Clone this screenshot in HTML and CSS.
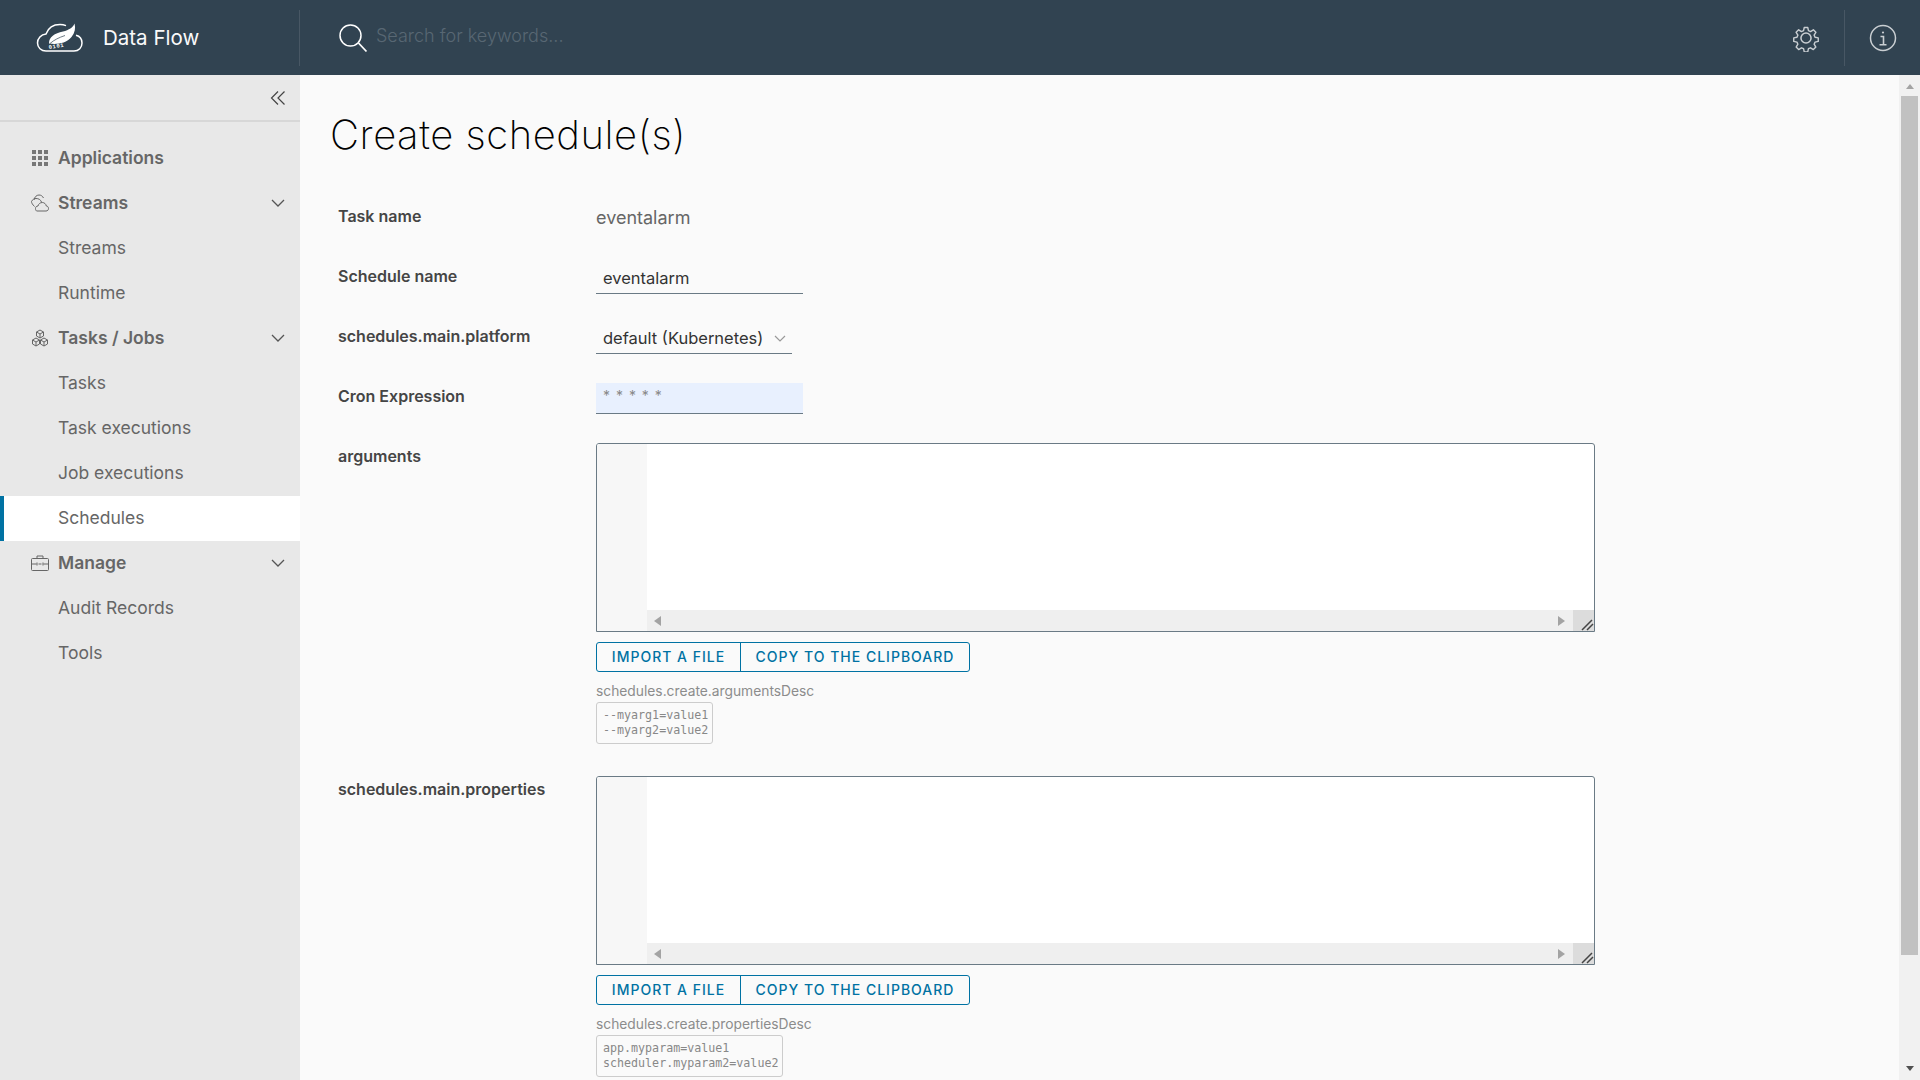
FILE: index.html
```html
<!DOCTYPE html>
<html lang="en">
<head>
  <meta charset="utf-8">
  <title>Data Flow – Create schedule(s)</title>
  <link rel="stylesheet" href="styles.css">
</head>
<body>

<!-- ───────── Top bar ───────── -->
<header class="topbar">
  <div class="brand">
    <svg class="logo" width="48" height="30" viewBox="0 0 48 30">
      <path d="M30 2.600C28 1.800 26 1.500 24 1.500c-7 0-12 4-14 9.500C5 11.500 1.500 15.500 1.500 20c0 4.500 3.800 8 8.500 8H38c4.800 0 8-3.500 8-8 0-4-2.500-7-6-7.800" fill="none" stroke="#fff" stroke-width="1.500"/>
      <path d="M38.500 .5c-1.500 4-5.500 6.500-11.500 8C18.500 10.500 13 13.500 13 20.500c7 1 17 .5 22.500-6.500 3.500-4.500 4.300-9 3-13.500z" fill="#fff"/>
      <path d="M14 20.500c4-3.500 9-6 15-8" fill="none" stroke="#314351" stroke-width=".7"/>
      <text class="logo-bits" x="13" y="26" transform="rotate(-9 13 26)">0101</text>
    </svg>
    <span class="brand-name">Data Flow</span>
  </div>
  <div class="search">
    <svg width="32" height="32" viewBox="0 0 32 32" fill="none" stroke="#fff" stroke-width="1.500">
      <circle cx="13.500" cy="13.500" r="10.500"/>
      <path d="M21.500 21l8 8.500" stroke-width="1.800"/>
    </svg>
    <span class="search-text">Search for keywords...</span>
  </div>
  <div class="topbar-icon">
    <svg width="28" height="28" viewBox="0 0 36 36" fill="none" stroke="#c9ced2" stroke-width="2">
      <path d="M15.500 3h5l1 4.500 3 1.300 4-2.500 3.600 3.600-2.500 4 1.300 3 4.600 1v5l-4.600 1-1.300 3 2.500 4-3.600 3.600-4-2.500-3 1.300-1 4.500h-5l-1-4.500-3-1.300-4 2.500-3.600-3.600 2.500-4-1.300-3-4.600-1v-5l4.600-1 1.300-3-2.500-4 3.600-3.600 4 2.500 3-1.300z" stroke-linejoin="round" transform="translate(1.800 1.800) scale(.9)"/>
      <circle cx="18" cy="18" r="6.500"/>
    </svg>
  </div>
  <div class="topbar-icon divided">
    <svg width="28" height="28" viewBox="0 0 28 28" fill="none" stroke="#c9ced2" stroke-width="1.500">
      <circle cx="14" cy="14" r="12.500"/>
      <path d="M11.500 12.500H14.500V20.500M10.500 20.800H17.500" stroke-width="1.600"/>
      <circle cx="14" cy="8.500" r="1.100" fill="#c9ced2" stroke="none"/>
    </svg>
  </div>
</header>

<div class="layout">

  <!-- ───────── Side nav ───────── -->
  <nav class="sidenav">
    <div class="collapse">
      <svg width="16" height="16" viewBox="0 0 16 16" fill="none" stroke="#444" stroke-width="1.200">
        <path d="M8 1.500L1.500 8 8 14.500M14.500 1.500L8 8l6.500 6.500"/>
      </svg>
    </div>
    <ul class="navlist">
      <li class="nav-head">
        <svg class="nav-icon" width="18" height="18" viewBox="0 0 18 18" fill="#777">
          <rect x="1" y="1" width="4" height="4"/><rect x="7" y="1" width="4" height="4"/><rect x="13" y="1" width="4" height="4"/>
          <rect x="1" y="7" width="4" height="4"/><rect x="7" y="7" width="4" height="4"/><rect x="13" y="7" width="4" height="4"/>
          <rect x="1" y="13" width="4" height="4"/><rect x="7" y="13" width="4" height="4"/><rect x="13" y="13" width="4" height="4"/>
        </svg>
        Applications
      </li>
      <li class="nav-head">
        <svg class="nav-icon" width="18" height="18" viewBox="0 0 18 18" fill="none" stroke="#666">
          <path d="M6 17h9c1.500 0 2.500-1 2.500-2.500S16.500 12 15.300 12c-.3-2-2-3.500-4-3.500-2.200 0-3.800 1.500-4.300 3.500C5.500 12 4.500 13 4.500 14.500S5 17 6 17z"/>
          <path d="M3.500 12.500C1.500 10.500.5 9 .5 7.500 1.500 5.500 3 4.500 5 4.500c2.500 0 4.500 1 5.500 3.500"/>
          <path d="M3 6C3.500 3 5.500 1 8 1c2 0 3.500 1 4.500 3"/>
        </svg>
        Streams
        <svg class="chevron" width="14" height="8" viewBox="0 0 14 8" fill="none" stroke="#555" stroke-width="1.300"><path d="M1 1l6 6 6-6"/></svg>
      </li>
      <li class="nav-sub">Streams</li>
      <li class="nav-sub">Runtime</li>
      <li class="nav-head">
        <svg class="nav-icon" width="18" height="18" viewBox="0 0 18 18" fill="none" stroke="#666">
          <path d="M9 1l3.500 2v4L9 9 5.500 7V3zM5.500 3L9 5l3.500-2M9 5v4"/>
          <path d="M5 9l3.500 2v4L5 17l-3.500-2v-4zM1.500 11L5 13l3.500-2M5 13v4"/>
          <path d="M13 9l3.500 2v4L13 17l-3.500-2v-4zM9.500 11l3.500 2 3.500-2M13 13v4"/>
        </svg>
        Tasks / Jobs
        <svg class="chevron" width="14" height="8" viewBox="0 0 14 8" fill="none" stroke="#555" stroke-width="1.300"><path d="M1 1l6 6 6-6"/></svg>
      </li>
      <li class="nav-sub">Tasks</li>
      <li class="nav-sub">Task executions</li>
      <li class="nav-sub">Job executions</li>
      <li class="nav-sub active">Schedules</li>
      <li class="nav-head">
        <svg class="nav-icon" width="18" height="16" viewBox="0 0 18 16" fill="none" stroke="#666">
          <rect x=".5" y="3.500" width="17" height="12" rx="1"/>
          <path d="M6 3.500V1h6v2.500M.5 9h5M12.500 9h5M6 7.500v3M12 7.500v3M7.500 9h3"/>
        </svg>
        Manage
        <svg class="chevron" width="14" height="8" viewBox="0 0 14 8" fill="none" stroke="#555" stroke-width="1.300"><path d="M1 1l6 6 6-6"/></svg>
      </li>
      <li class="nav-sub">Audit Records</li>
      <li class="nav-sub">Tools</li>
    </ul>
  </nav>

  <!-- ───────── Form ───────── -->
  <main class="content">
    <h1>Create schedule(s)</h1>

    <div class="row">
      <label>Task name</label>
      <div class="static">eventalarm</div>
    </div>
    <div class="row">
      <label>Schedule name</label>
      <div class="input">eventalarm</div>
    </div>
    <div class="row">
      <label>schedules.main.platform</label>
      <div class="input select">
        default (Kubernetes)
        <svg width="12" height="7" viewBox="0 0 12 7" fill="none" stroke="#999" stroke-width="1.200"><path d="M1 1l5 5 5-5"/></svg>
      </div>
    </div>
    <div class="row">
      <label>Cron Expression</label>
      <div class="input cron">* * * * *</div>
    </div>

    <div class="row editor-row">
      <label>arguments</label>
      <div class="field">
        <div class="editor">
          <div class="gutter"></div>
          <div class="editor-main">
            <div class="editor-text"></div>
            <div class="hscroll">
              <span class="arrow-left"></span>
              <span class="arrow-right"></span>
              <span class="resizer">
                <svg width="13" height="12" viewBox="0 0 13 12" fill="none" stroke="#444" stroke-width="1.500"><path d="M1 11L11 1M6 11l6-6"/></svg>
              </span>
            </div>
          </div>
        </div>
        <div class="btn-group">
          <button class="import">Import a file</button>
          <button class="copy">Copy to the clipboard</button>
        </div>
        <p class="desc">schedules.create.argumentsDesc</p>
        <pre class="sample">--myarg1=value1
--myarg2=value2</pre>
      </div>
    </div>

    <div class="row editor-row">
      <label>schedules.main.properties</label>
      <div class="field">
        <div class="editor">
          <div class="gutter"></div>
          <div class="editor-main">
            <div class="editor-text"></div>
            <div class="hscroll">
              <span class="arrow-left"></span>
              <span class="arrow-right"></span>
              <span class="resizer">
                <svg width="13" height="12" viewBox="0 0 13 12" fill="none" stroke="#444" stroke-width="1.500"><path d="M1 11L11 1M6 11l6-6"/></svg>
              </span>
            </div>
          </div>
        </div>
        <div class="btn-group">
          <button class="import">Import a file</button>
          <button class="copy">Copy to the clipboard</button>
        </div>
        <p class="desc">schedules.create.propertiesDesc</p>
        <pre class="sample">app.myparam=value1
scheduler.myparam2=value2</pre>
      </div>
    </div>
  </main>

  <!-- page scrollbar -->
  <div class="vscroll">
    <span class="arrow-up"></span>
    <span class="thumb"></span>
    <span class="arrow-down"></span>
  </div>
</div>

</body>
</html>
```

FILE: styles.css
```css
:root {font-family: Inter, "Noto Sans", sans-serif;}
html, body {height:100%}
body   {margin:0;overflow:hidden;background:#fafafa;color:#565656}

/* top bar */
.topbar {display:flex;align-items:center;height:75px;background:#314351;color:#fff}
.brand  {display:flex;align-items:center;width:300px;height:56px;padding-left:36px;
         box-sizing:border-box;border-right:1px solid #485764}
.brand-name {margin-left:19px;font-size:20.500px;color:#fafafa}
.logo   {flex:none}
.logo-bits {font:700 5.500px "Liberation Mono",monospace;fill:#fff;letter-spacing:.6px}
.search {display:flex;align-items:center;flex:1;padding-left:37px}
.search-text {margin-left:7px;margin-top:-5px;font-size:18px;font-weight:300;color:#586773}
.topbar-icon {display:flex;align-items:center;justify-content:center;width:77px;height:56px}
.topbar-icon.divided {border-left:1px solid #485764;width:76px;padding-left:1px;box-sizing:border-box}

/* layout */
.layout  {display:flex;height:1005px}
.sidenav {flex:none;width:300px;background:#e8e8e8}
.collapse {display:flex;justify-content:flex-end;align-items:center;height:45px;padding-right:14px;
           border-bottom:2px solid #d7d7d7}
.navlist {list-style:none;margin:14px 0 0;padding:0}
.navlist li {display:flex;align-items:center;height:45px;padding:0 0 2px 58px;font-size:17.500px;color:#666;
             box-sizing:border-box;position:relative}
.nav-head {font-weight:600}
.nav-icon {position:absolute;left:31px}
.chevron  {position:absolute;right:15px}
.navlist li.active {background:#fff;border-left:4px solid #0072a3;padding-left:54px}

/* form */
.content {flex:1;padding:0 0 0 30px;overflow:hidden}
h1 {margin:35px 0 42px;font-size:40px;line-height:50px;font-weight:200;letter-spacing:.55px;color:#000}
.row {display:flex;align-items:flex-start;height:60px;padding-left:8px}
.row label {flex:none;width:258px;font-size:16px;font-weight:600;color:#454545;line-height:24px;padding-top:2px}
.static {font-size:18px;line-height:24px;padding-top:4px;color:#666}
.input {display:flex;align-items:center;width:207px;height:31px;padding:0 7px;box-sizing:border-box;
        border-bottom:1px solid #6a7a85;font-size:16.500px;color:#333;margin-top:1px}
.select {width:196px;justify-content:space-between;padding-right:6px}
.cron {background:#e8f0fe;color:#888;font-size:14px;align-items:flex-start;padding-top:4px;word-spacing:2px}
.editor-row {height:auto;margin-bottom:31px}
.field {width:999px}

/* code editor */
.editor {display:flex;height:189px;margin-top:1px;box-sizing:border-box;background:#fff;
         border:1px solid #6a7a85;border-radius:3px 3px 0 0;overflow:hidden}
.gutter {flex:none;width:50px;background:#f7f7f7}
.editor-main {flex:1;display:flex;flex-direction:column}
.editor-text {flex:1}
.hscroll {flex:none;display:flex;align-items:center;justify-content:space-between;height:21px;
          padding-left:7px;background:#efefef}
.arrow-left  {border:5px solid transparent;border-right:7px solid #a3a3a3;border-left:0}
.arrow-right {border:5px solid transparent;border-left:7px solid #a3a3a3;border-right:0;margin-left:auto;margin-right:8px}
.resizer {display:flex;align-items:flex-end;justify-content:flex-end;width:21px;height:21px;background:#dcdcdc}

.btn-group {display:inline-flex;margin-top:10px;height:30px;box-sizing:border-box;
            border:1px solid #0072a3;border-radius:3px;vertical-align:top}
.btn-group button {border:0;background:none;padding:0 0 2px;font:500 14px Inter,sans-serif;letter-spacing:1px;
                   text-transform:uppercase;white-space:nowrap;color:#0072a3}
.btn-group .import {width:144px;border-right:1px solid #0072a3}
.btn-group .copy   {width:228px}
.desc {margin:10px 0 0;font-size:13.800px;line-height:19px;color:#8c8c8c}
.sample {width:max-content;margin:1px 0 0;padding:5px 4px 5px 6px;border:1px solid #ccc;border-radius:3px;
         font:11.670px/15px "DejaVu Sans Mono",monospace;color:#888}

/* page scrollbar */
.vscroll {flex:none;display:flex;flex-direction:column;align-items:center;width:21px;background:#f1f1f1}
.arrow-up   {margin-top:9px;border:4.500px solid transparent;border-bottom:5px solid #a3a3a3;border-top:0}
.thumb      {width:17px;height:859px;margin-top:7px;background:#c1c1c1}
.arrow-down {margin-top:auto;margin-bottom:9px;border:4.500px solid transparent;border-top:5px solid #505050;border-bottom:0}
```
